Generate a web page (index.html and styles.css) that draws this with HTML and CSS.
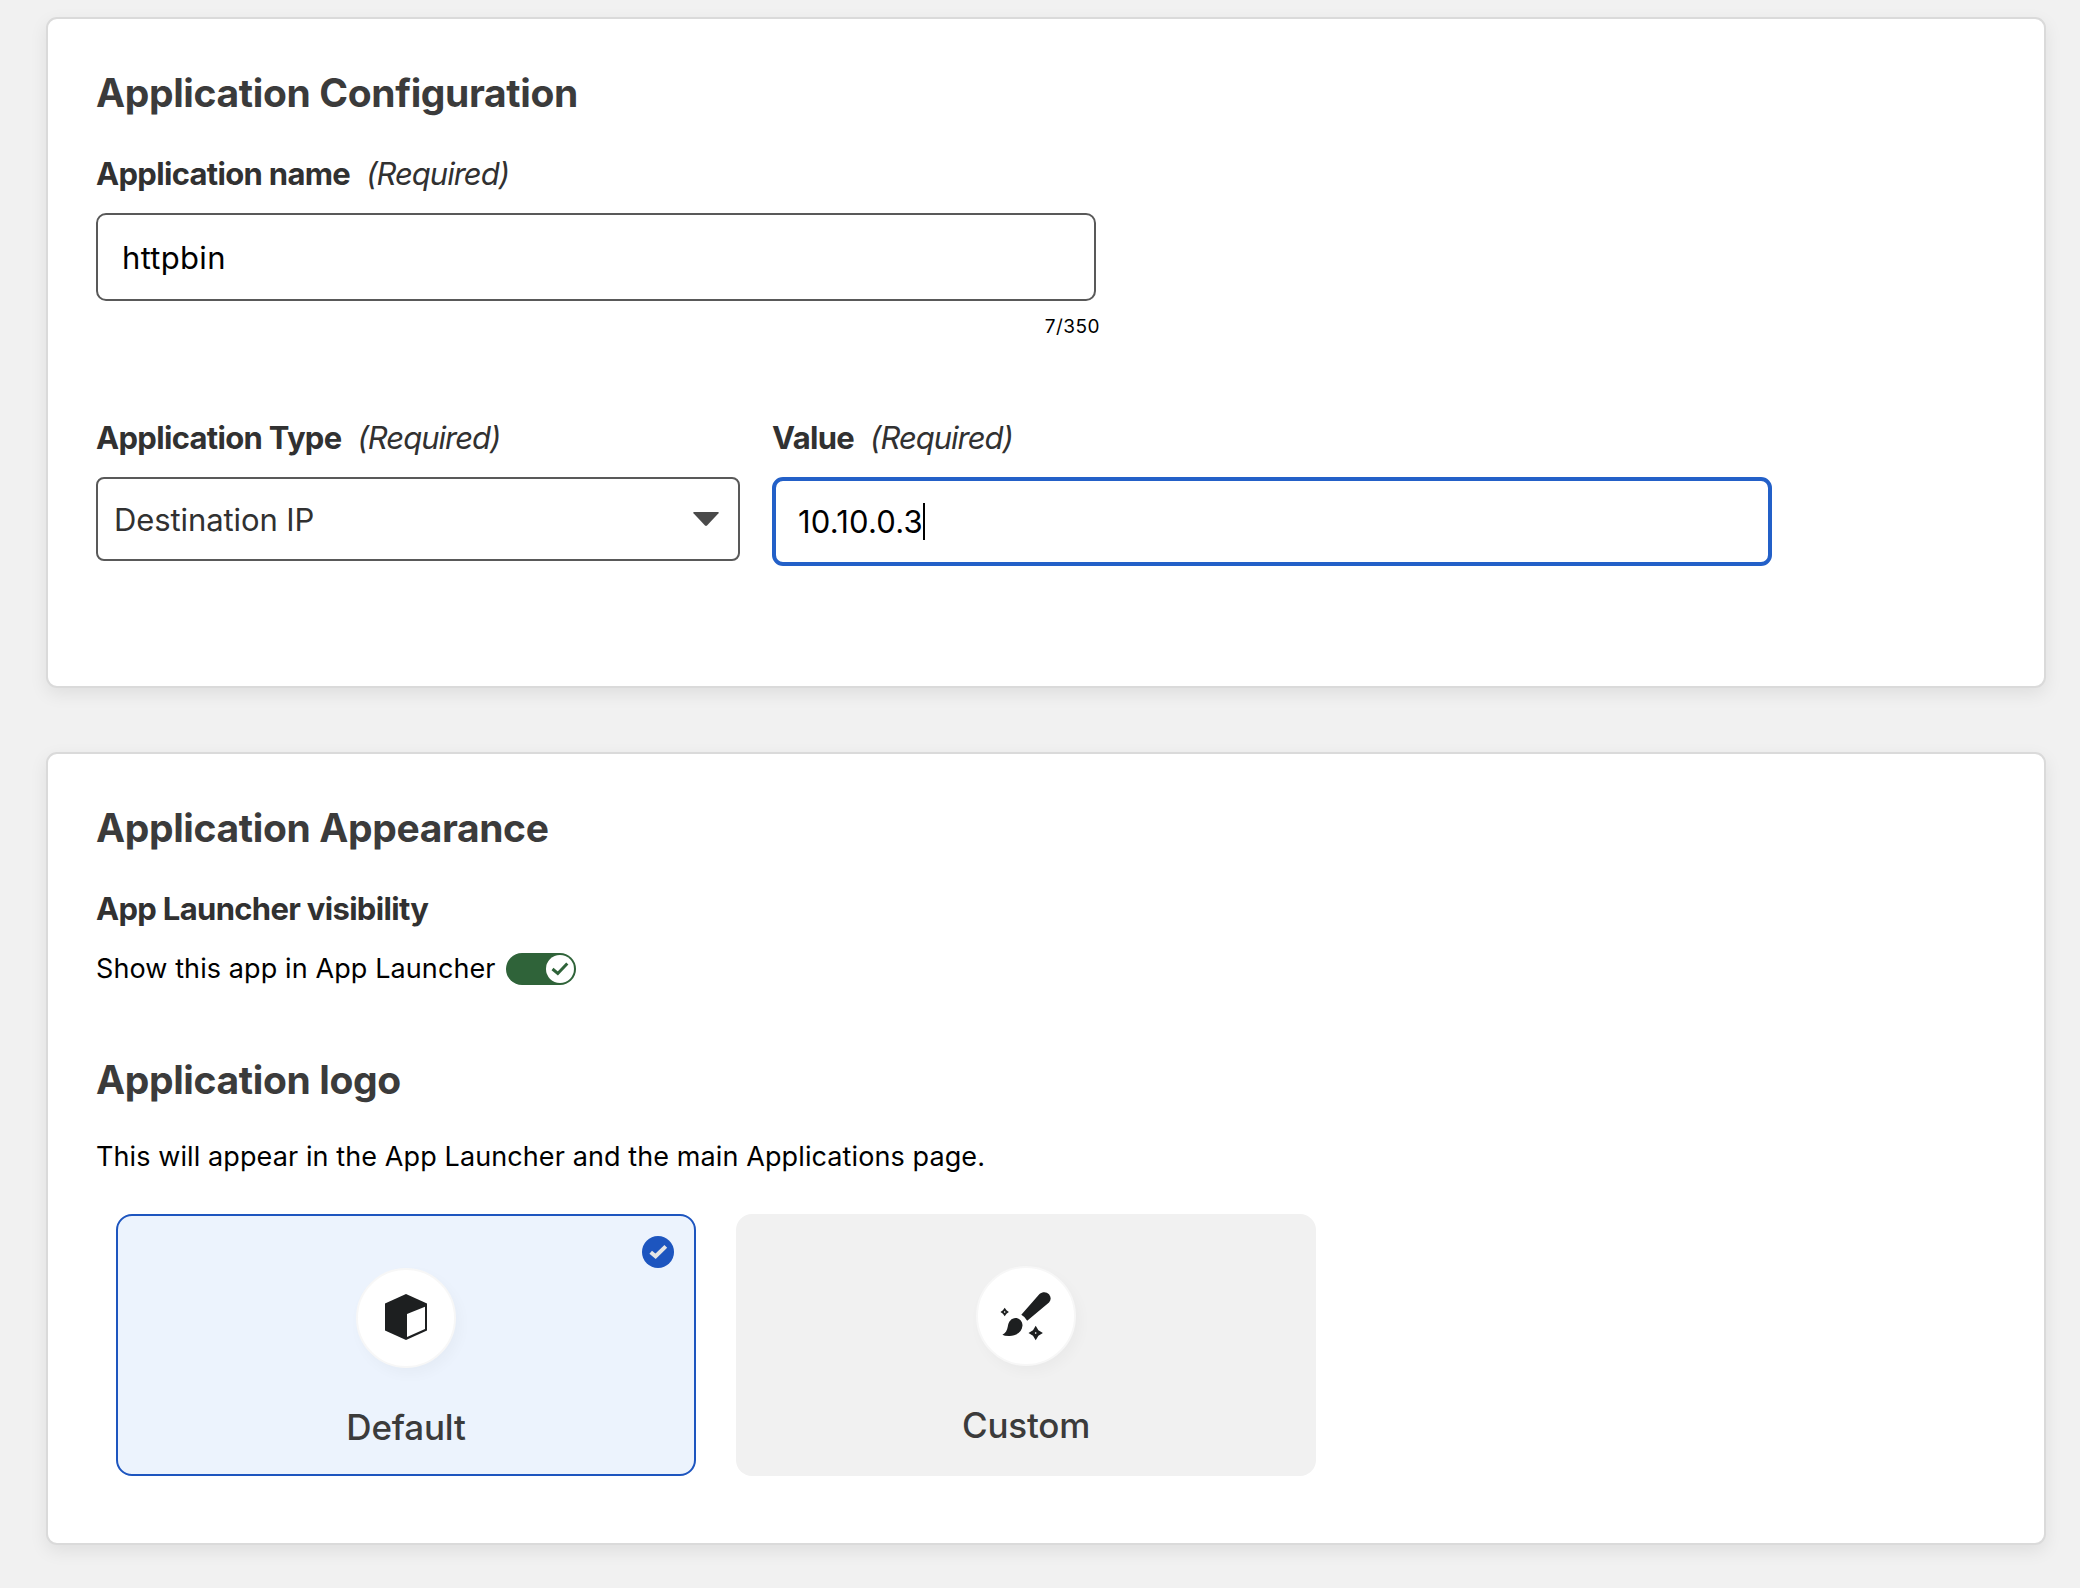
FILE: index.html
```html
<!DOCTYPE html>
<html lang="en">
<head>
<meta charset="utf-8">
<title>Application</title>
<link rel="stylesheet" href="styles.css">
</head>
<body>
<main class="page">
  <section class="card card-config">
    <h2 class="title">Application Configuration</h2>
    <div class="field field-name">
      <label class="label"><b>Application name</b><i>(Required)</i></label>
      <div class="input"><span class="entry">httpbin</span></div>
      <div class="counter"><span>7/350</span></div>
    </div>
    <div class="row">
      <div class="field field-type">
        <label class="label"><b>Application Type</b><i>(Required)</i></label>
        <div class="select"><span>Destination IP</span>
          <svg class="caret" viewBox="0 0 26 14"><path d="M1 0H25Q26.4 0 25.5 1.200L14 13.500Q13 14.400 12 13.500L.5 1.200Q-.4 0 1 0Z"/></svg>
        </div>
      </div>
      <div class="field field-value">
        <label class="label"><b>Value</b><i>(Required)</i></label>
        <div class="input input-focus"><span class="address">10.10.0.3</span><span class="cursor"></span></div>
      </div>
    </div>
  </section>

  <section class="card card-look">
    <h2 class="title">Application Appearance</h2>
    <h3 class="label label-visibility"><b>App Launcher visibility</b></h3>
    <div class="switch-row">
      <span class="body">Show this app in App Launcher</span>
      <span class="switch"><span class="knob"><svg viewBox="0 0 28 28"><path d="M6.500 14L11.800 18.500L21.300 8.500"/></svg></span></span>
    </div>
    <h2 class="title title-logo">Application logo</h2>
    <p class="body body-logo">This will appear in the App Launcher and the main Applications page.</p>
    <div class="options">
      <div class="option option-selected">
        <span class="tick"><svg viewBox="0 0 32 32"><path d="M8.700 16.200L13.600 20.300L23.800 10.400"/></svg></span>
        <span class="disc"><svg class="cube" viewBox="0 0 42 46"><path d="M21 0L42 9.500V36.500L21 46L0 36.500V9.500Z"/><path class="face" d="M22 20L40 12.700V35L22 43Z"/></svg></span>
        <span class="name">Default</span>
      </div>
      <div class="option">
        <span class="disc"><svg class="brush" viewBox="0 0 50 48"><path d="M38.500 2C41.500 -.5 45.500 -.5 48 2.200C50.300 5 50.200 8 48 10.500L26.200 28.700Q24.500 25 20.300 22.700Z"/><path d="M14.500 26C18.500 26 21.600 29.500 21.500 33.500C21 40 15.500 43.800 8.500 43.900Q3.500 44 1.400 42.700C4.800 41 6 38.500 6.800 34.500C7.500 29.500 10.500 26 14.500 26Z"/><path fill-rule="evenodd" d="M3.700 15.800L5.500 18.200L7.900 20L5.500 21.800L3.700 24.200L1.900 21.800L-.5 20L1.900 18.200ZM3.700 19.100L2.800 20L3.700 20.900L4.600 20Z"/><path fill-rule="evenodd" d="M34.700 33.800L37.400 38.300L41.900 41L37.400 43.700L34.700 48.200L32 43.700L27.500 41L32 38.300ZM34.700 40L33.700 41L34.700 42L35.700 41Z"/></svg></span>
        <span class="name">Custom</span>
      </div>
    </div>
  </section>
</main>
</body>
</html>
```
FILE: styles.css
```css
* { box-sizing: border-box; }
body { margin: 0; background: #f1f1f1; font-family: Inter, "Liberation Sans", sans-serif; color: #000; }
.page { height: 1588px; padding: 17px 34px 0 46px; display: flex; flex-direction: column; gap: 64px; overflow: hidden; }
.card { flex: none; background: #fff; border: 2px solid #dadada; border-radius: 11px; box-shadow: 0 6px 18px rgba(0,0,0,.08); padding: 49px 48px 0; }
.card-config { height: 671px; }
.card-look { height: 793px; }
.title { margin: 0; font-size: 39px; font-weight: 650; line-height: 50px; letter-spacing: -.37px; color: #3b3b3b; }
.label { display: flex; align-items: baseline; gap: 16px; margin: 0; font-size: 31px; line-height: 40px; font-weight: 400; color: #313131; }
.label b { font-weight: 670; letter-spacing: -.68px; }
.label i { letter-spacing: -1px; }
.label-visibility { margin-top: 36px; }
.field-name { margin-top: 36px; width: 1000px; }
.input { margin-top: 19px; height: 88px; border: 2px solid #595959; border-radius: 10px; display: flex; align-items: center; padding: 0 24px; font-size: 31px; }
.input-focus { border: 4px solid #2360c8; border-radius: 11px; height: 89px; padding: 0 22px; }
.entry { letter-spacing: .3px; }
.address { letter-spacing: .2px; }
.cursor { width: 2px; height: 37px; background: #000; }
.counter { display: flex; justify-content: flex-end; margin-right: -4px; margin-top: 13px; font-size: 19px; line-height: 26px; letter-spacing: .5px; }
.row { display: flex; gap: 32px; margin-top: 78px; }
.field-type { width: 644px; }
.field-value { width: 1000px; }
.select { margin-top: 19px; height: 84px; border: 2px solid #595959; border-radius: 8px; display: flex; align-items: center; justify-content: space-between; padding: 0 19px 0 16px; font-size: 31px; letter-spacing: -.09px; color: #313131; }
.caret { width: 26px; height: 14px; fill: #4a4a4a; }
.body { margin: 0; font-size: 27px; line-height: 36px; letter-spacing: .1px; }
.body-logo { margin-top: 34px; }
.switch-row { display: flex; align-items: center; gap: 10.4px; margin-top: 22px; }
.switch { width: 70px; height: 32px; border-radius: 16px; background: #2f6339; display: flex; justify-content: flex-end; padding: 2px; }
.knob { width: 28px; height: 28px; border-radius: 50%; background: #fff; }
.knob svg { display: block; fill: none; stroke: #2f6339; stroke-width: 3; }
.title-logo { margin-top: 68px; }
.options { display: flex; gap: 40px; margin: 39px 20px 0; }
.option { position: relative; width: 580px; height: 262px; border-radius: 16px; background: #f1f1f1; display: flex; flex-direction: column; align-items: center; padding-top: 52px; }
.option-selected { border: 2px solid #1d55bf; background: #ecf3fd; }
.tick { position: absolute; right: 20px; top: 20px; width: 32px; height: 32px; border-radius: 50%; background: #1d55bf; }
.tick svg { display: block; fill: none; stroke: #e5e5e5; stroke-width: 4; }
.disc { width: 100px; height: 100px; border-radius: 50%; background: #fff; border: 2px solid #f7f7f7; box-shadow: 4px 6px 14px rgba(0,0,0,.03); display: flex; align-items: center; justify-content: center; }
.cube { width: 42px; height: 46px; margin-bottom: 2px; fill: #1d1f20; }
.cube .face { fill: #fff; }
.brush { width: 50px; height: 48px; fill: #1d1f20; overflow: visible; }
.name { margin-top: 35px; font-size: 35px; line-height: 48px; font-weight: 500; letter-spacing: -.2px; color: #3b3b3b; }
```
